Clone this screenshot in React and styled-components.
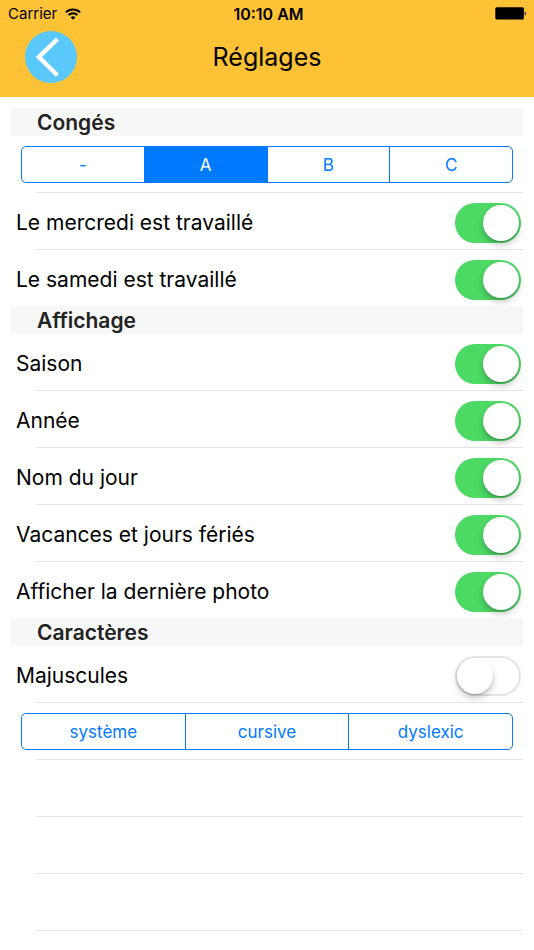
import React, { useState } from "react";
import styled, { createGlobalStyle } from "styled-components";

const GlobalStyle = createGlobalStyle`
    * {
        box-sizing: border-box;
    }

    body {
        margin: 0;
        background: #fff;
        color: #000;
        font-family: Inter, "Liberation Sans", sans-serif;
    }
`;

const periods = ["-", "A", "B", "C"];
const fonts = ["système", "cursive", "dyslexic"];

const StatusBar = () => (
    <Status>
        <Carrier>
            Carrier
            <svg width="16" height="12" viewBox="0 0 16 12" fill="none" stroke="#000" strokeWidth="2" aria-hidden="true">
                <path d="M0.9 4.3a10.1 10.1 0 0 1 14.2 0" />
                <path d="M3.5 7.1a6.4 6.4 0 0 1 9 0" />
                <path d="M8 11.8 5.6 9.4a3.4 3.4 0 0 1 4.8 0z" fill="#000" stroke="none" />
            </svg>
        </Carrier>
        <Clock>10:10 AM</Clock>
        <Battery width="32" height="13" viewBox="0 0 32 13" aria-hidden="true">
            <rect x="0.3" y="0.3" width="28.6" height="12.2" rx="1.5" />
            <path d="M29.8 4.4c1.6.6 1.6 3.4 0 4z" />
        </Battery>
    </Status>
);

const SwitchRow = ({ label, defaultChecked }) => (
    <Row as="label">
        <Label>{label}</Label>
        <Switch type="checkbox" role="switch" defaultChecked={defaultChecked} />
    </Row>
);

const Segmented = ({ name, label, options, initial }) => {

    const [value, setValue] = useState(initial);

    return (
        <Row>
            <Segments role="radiogroup" aria-label={label}>
                {options.map((option) => (
                    <Segment key={option}>
                        <input
                            type="radio"
                            name={name}
                            value={option}
                            checked={value === option}
                            onChange={() => setValue(option)}
                        />
                        <span>{option}</span>
                    </Segment>
                ))}
            </Segments>
        </Row>
    );
};

const App = () => {
    return (
        <>
            <GlobalStyle />
            <Header>
                <StatusBar />
                <NavBar>
                    <BackButton type="button" aria-label="Retour">
                        <svg width="52" height="52" viewBox="0 0 52 52" fill="none" stroke="#fff" strokeWidth="4.4">
                            <path d="M32.4 8.2 13.9 26l18.5 18.2" />
                        </svg>
                    </BackButton>
                    <Title>Réglages</Title>
                </NavBar>
            </Header>
            <Settings>
                <section>
                    <SectionTitle>Congés</SectionTitle>
                    <Segmented name="conges" label="Congés" options={periods} initial="A" />
                    <Separator />
                    <SwitchRow label="Le mercredi est travaillé" defaultChecked />
                    <Separator />
                    <SwitchRow label="Le samedi est travaillé" defaultChecked />
                </section>
                <section>
                    <SectionTitle>Affichage</SectionTitle>
                    <SwitchRow label="Saison" defaultChecked />
                    <Separator />
                    <SwitchRow label="Année" defaultChecked />
                    <Separator />
                    <SwitchRow label="Nom du jour" defaultChecked />
                    <Separator />
                    <SwitchRow label="Vacances et jours fériés" defaultChecked />
                    <Separator />
                    <SwitchRow label="Afficher la dernière photo" defaultChecked />
                </section>
                <section>
                    <SectionTitle>Caractères</SectionTitle>
                    <SwitchRow label="Majuscules" />
                    <Separator />
                    <Segmented name="police" label="Police" options={fonts} />
                    <Separator />
                    <Row />
                    <Separator />
                    <Row />
                    <Separator />
                    <Row />
                    <Separator />
                </section>
            </Settings>
        </>
    );
};

const Header = styled.header`
    padding-bottom: 14px;
    background: #fdc236;
`;

const Status = styled.div`
    display: grid;
    grid-template-columns: 1fr auto 1fr;
    align-items: center;
    height: 27px;
    padding: 0 7px 0 8px;
    font-size: 15px;
`;

const Carrier = styled.div`
    display: flex;
    align-items: center;
    gap: 8px;
`;

const Clock = styled.div`
    padding-left: 2px;
    font-size: 16px;
    font-weight: 600;
`;

const Battery = styled.svg`
    justify-self: end;
`;

const NavBar = styled.div`
    display: grid;
    grid-template-columns: 1fr auto 1fr;
    align-items: center;
    padding: 4px 25px 0;
`;

const BackButton = styled.button`
    display: flex;
    width: 52px;
    height: 52px;
    padding: 0;
    border: 0;
    border-radius: 50%;
    background: #5ac8fa;
    cursor: pointer;
`;

const Title = styled.h1`
    margin: 0;
    font-size: 25px;
    font-weight: 400;
    line-height: 32px;
`;

const Settings = styled.main`
    padding: 11px 11px 0;
`;

const SectionTitle = styled.h2`
    margin: 0;
    padding: 2px 26px 0;
    background: #f7f7f7;
    color: #222;
    font-size: 21px;
    font-weight: 600;
    line-height: 26px;
`;

const Row = styled.div`
    display: flex;
    align-items: center;
    height: 56px;
    padding: 0 2px 0 5px;
`;

const Separator = styled.div`
    height: 1px;
    margin-left: 25px;
    background: #e4e4e6;
`;

const Label = styled.span`
    flex: 1;
    padding-top: 3px;
    font-size: 21px;
    line-height: 28px;
`;

const Switch = styled.input`
    appearance: none;
    display: flex;
    width: 66px;
    height: 40px;
    margin: 4px 0 0;
    padding: 2px;
    border-radius: 20px;
    background: #fff;
    box-shadow: inset 0 0 0 2px #e4e4e4;
    cursor: pointer;

    &::before {
        content: "";
        width: 36px;
        height: 36px;
        border-radius: 50%;
        background: #fff;
        box-shadow: 0 4px 6px rgba(0, 0, 0, 0.22), 0 1px 1px rgba(0, 0, 0, 0.16);
    }

    &:checked {
        justify-content: flex-end;
        background: #4cd964;
        box-shadow: none;
    }
`;

const Segments = styled.div`
    display: flex;
    flex: 1;
    height: 37px;
    margin: 1px 8px 0 5px;
    border: 1px solid #007aff;
    border-radius: 5px;
    overflow: hidden;
`;

const Segment = styled.label`
    flex: 1;
    display: flex;
    color: #007aff;
    font-size: 17px;
    cursor: pointer;

    & + & {
        border-left: 1px solid #007aff;
    }

    input {
        appearance: none;
        width: 0;
        margin: 0;
    }

    span {
        flex: 1;
        display: flex;
        align-items: center;
        justify-content: center;
        padding-top: 1px;
    }

    input:checked + span {
        background: #007aff;
        color: #fff;
    }
`;

export default App;
